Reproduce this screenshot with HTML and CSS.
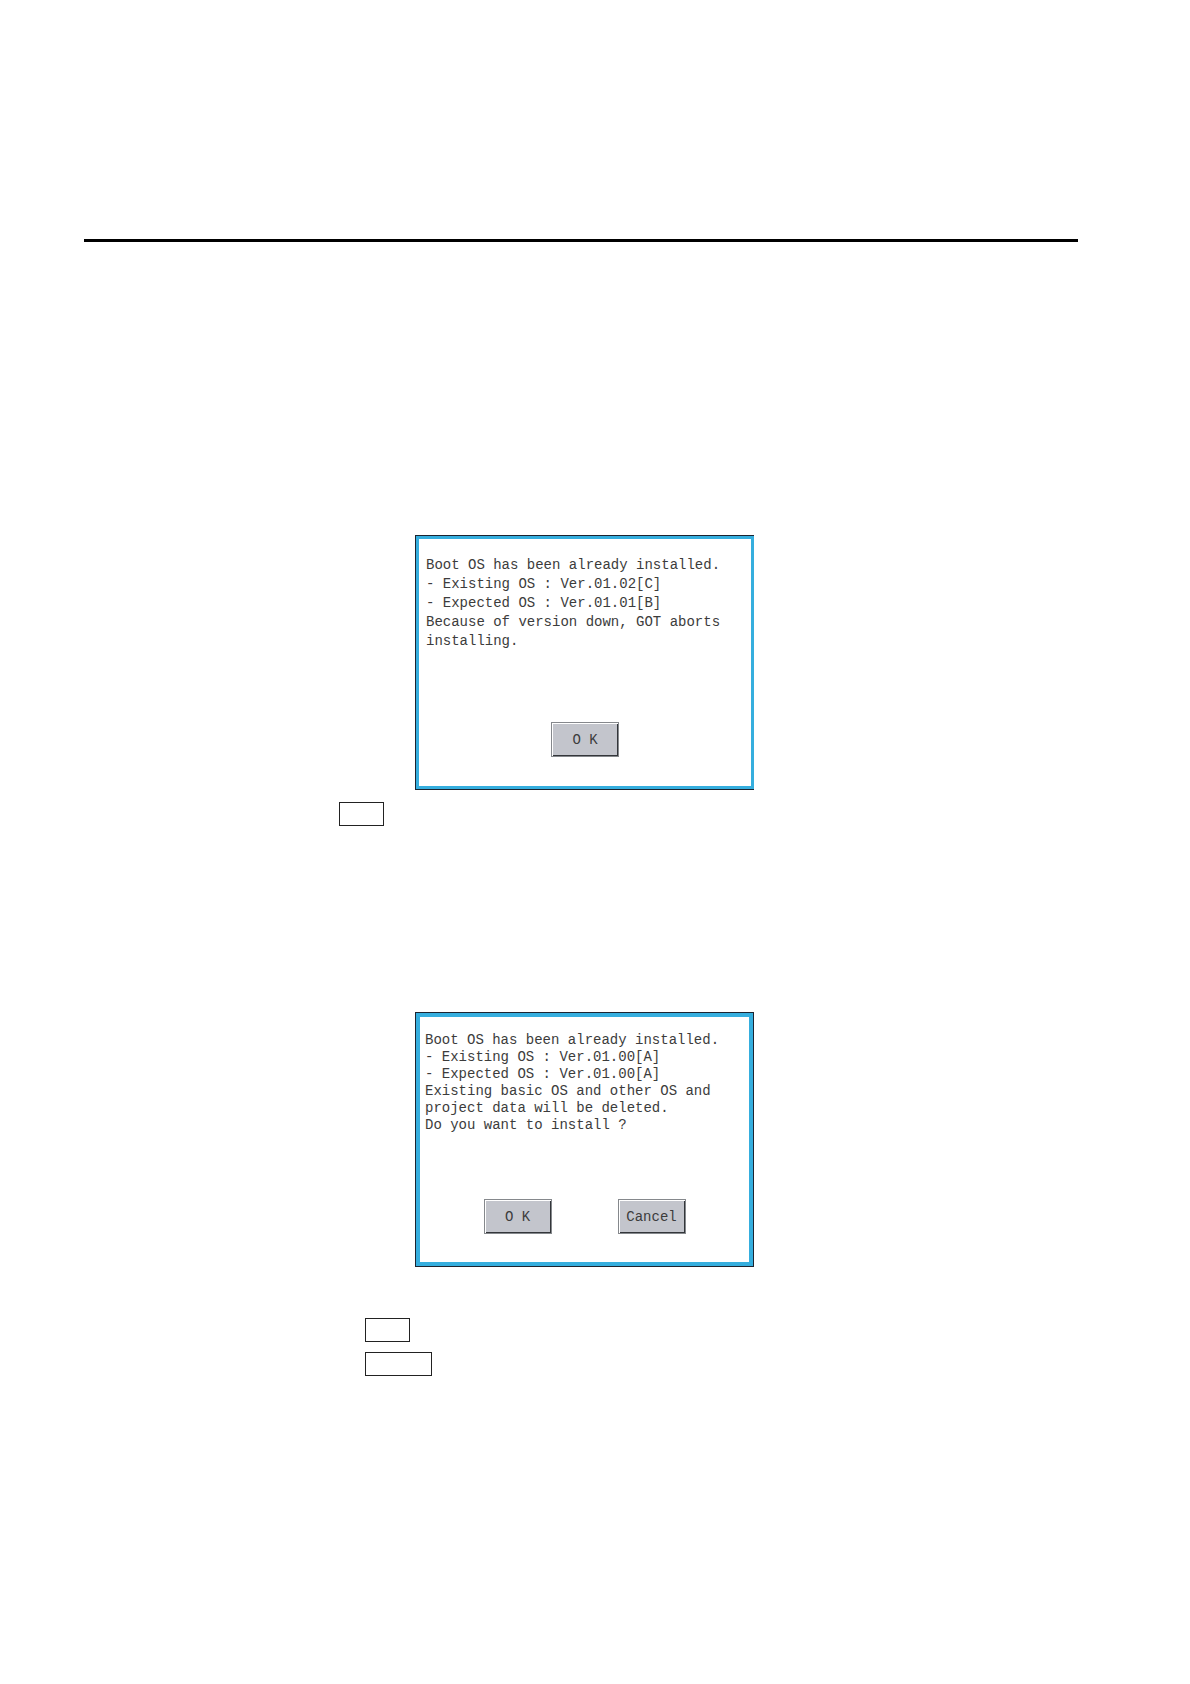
FILE: index.html
```html
<!DOCTYPE html>
<html lang="en">
<head>
    <meta charset="UTF-8">
    <meta name="viewport" content="width=device-width, initial-scale=1.0">
    <title>Boot OS Installation</title>
    <link rel="stylesheet" href="styles.css">
</head>

<body>
    <main class="page">
        <hr class="rule">

        <!-- Version down: install is aborted -->
        <section class="dialog dialog-abort">
            <p class="message">
                Boot OS has been already installed.<br>
                - Existing OS : Ver.01.02[C]<br>
                - Expected OS : Ver.01.01[B]<br>
                Because of version down, GOT aborts<br>
                installing.
            </p>
            <div class="buttons">
                <button type="button">O K</button>
            </div>
        </section>

        <div class="key-box key-single"></div>

        <!-- Same version: confirm install -->
        <section class="dialog dialog-confirm">
            <p class="message">
                Boot OS has been already installed.<br>
                - Existing OS : Ver.01.00[A]<br>
                - Expected OS : Ver.01.00[A]<br>
                Existing basic OS and other OS and<br>
                project data will be deleted.<br>
                Do you want to install ?
            </p>
            <div class="buttons">
                <button type="button">O K</button>
                <button type="button">Cancel</button>
            </div>
        </section>

        <div class="key-list">
            <div class="key-box"></div>
            <div class="key-box key-wide"></div>
        </div>
    </main>
</body>
</html>
```

FILE: styles.css
```css
* {
    box-sizing: border-box;
}

body {
    margin: 0;
    background-color: #fff;
    color: #3c3c3c;
    font-family: "Liberation Mono", monospace;
    font-size: 14px;
}

.page {
    padding: 239px 112px 300px 84px;
}

.rule {
    height: 3px;
    margin: 0 0 293px;
    border: none;
    background-color: #000;
}

.dialog {
    display: flex;
    flex-direction: column;
    justify-content: space-between;
    width: 339px;
    min-height: 255px;
    margin-left: 331px;
    border: 1px solid #1c2430;
    background-color: #fff;
}

.dialog-abort {
    padding: 20px 10px 32px;
    border-right: none;
    box-shadow: inset 0 0 0 3px #35aede;
    line-height: 19px;
}

.dialog-confirm {
    padding: 19px 9px 32px;
    box-shadow: inset 0 0 0 4px #35aede;
    line-height: 17px;
}

.message {
    margin: 0;
    white-space: nowrap;
}

.buttons {
    display: flex;
    justify-content: center;
    gap: 66px;
}

button {
    width: 68px;
    height: 35px;
    padding: 0;
    border: 1px solid #85888c;
    background-color: #c3c5cc;
    box-shadow: inset 1px 1px 0 #fff, inset -1px -1px 0 #33363a;
    color: #3c3c3c;
    font-family: inherit;
    font-size: 14px;
}

.key-box {
    width: 45px;
    height: 24px;
    border: 1px solid #222;
}

.key-single {
    margin: 12px 0 186px 255px;
}

.key-list {
    display: flex;
    flex-direction: column;
    gap: 10px;
    margin: 51px 0 0 281px;
}

.key-wide {
    width: 67px;
}
```
